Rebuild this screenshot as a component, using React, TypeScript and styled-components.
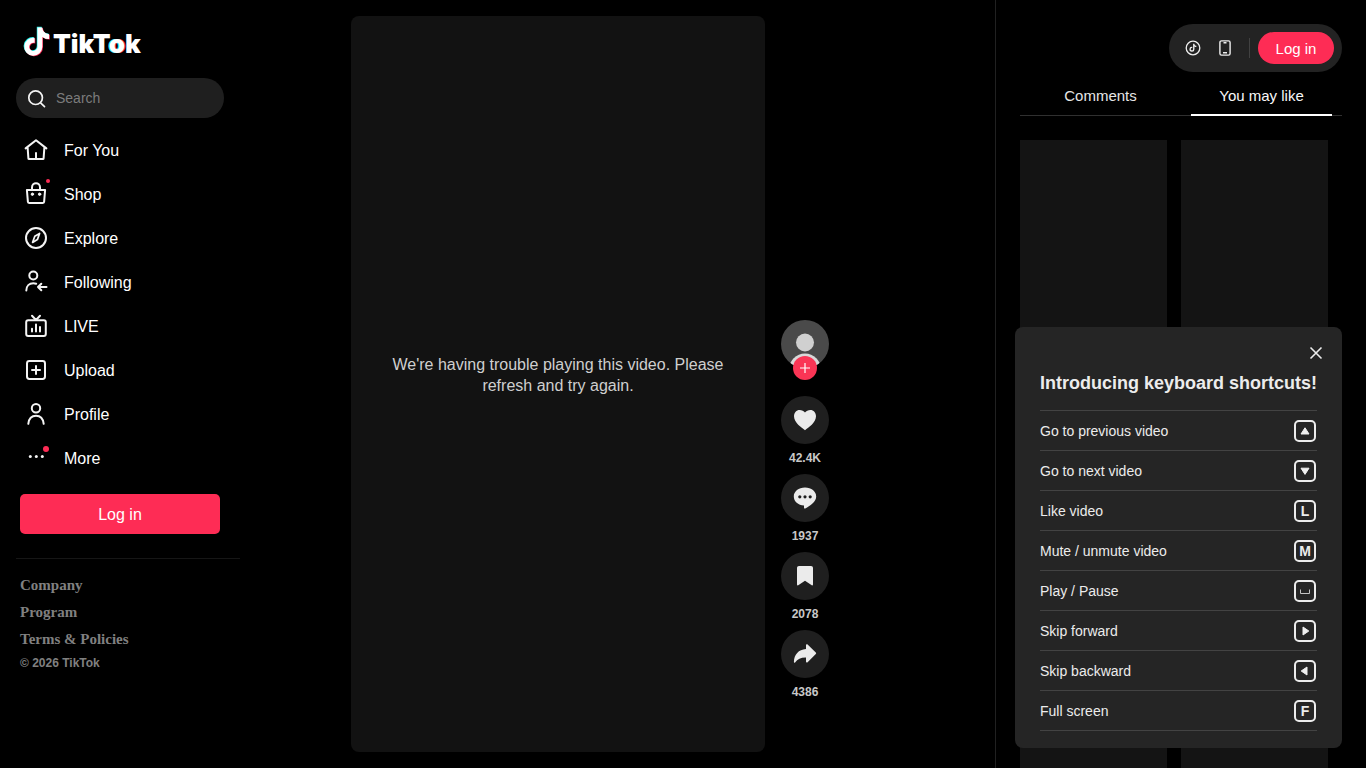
import React from "react";
import styled, { createGlobalStyle, css } from "styled-components";

const GlobalStyle = createGlobalStyle`
  *, *::before, *::after { box-sizing: border-box; }
  body {
    margin: 0;
    background: #000;
    color: #f6f6f6;
    font-family: "Liberation Sans", Arial, sans-serif;
    font-size: 16px;
  }
  button { font-family: inherit; border: 0; padding: 0; background: none; color: inherit; cursor: pointer; }
  a { color: inherit; text-decoration: none; }
  ul { list-style: none; margin: 0; padding: 0; }
`;

const Page = styled.div`
  display: flex;
  height: 100vh;
  overflow: hidden;
`;

/* ---------- Sidebar ---------- */

const Sidebar = styled.aside`
  flex: 0 0 240px;
  min-width: 0;
  padding: 20px 0 0 16px;
`;

const Logo = styled.a`
  display: flex;
  align-items: center;
  gap: 3px;
  height: 42px;
  padding-left: 7px;
  margin-bottom: 16px;
`;

const Wordmark = styled.span`
  font-family: Inter, sans-serif;
  font-weight: 900;
  font-size: 26px;
  line-height: 32px;
  color: #fff;
  padding-top: 6px;
`;

const TintedLetter = styled.span`
  text-shadow: -1px 0 #25f4ee, 1px 0 #fe2c55;
`;

const SearchBox = styled.label`
  display: flex;
  align-items: center;
  gap: 8px;
  height: 40px;
  margin: 0 16px 10px 0;
  padding: 0 12px 0 8px;
  border-radius: 20px;
  background: #1f1f1f;
`;

const SearchInput = styled.input`
  flex: 1;
  width: 100%;
  min-width: 0;
  padding: 0;
  border: 0;
  outline: 0;
  background: none;
  color: #f6f6f6;
  font: 14px/20px "Liberation Sans", Arial, sans-serif;
  &::placeholder { color: #7c7c7c; opacity: 1; }
`;

const NavLink = styled.a`
  display: flex;
  align-items: center;
  gap: 16px;
  height: 44px;
  padding-left: 8px;
  color: #fff;
`;

const NavIcon = styled.span`
  position: relative;
  display: flex;
`;

const NavLabel = styled.span`
  padding-top: 2px;
`;

const Dot = styled.i<{ $size: number }>`
  position: absolute;
  top: ${(p) => (p.$size > 4 ? 0 : -3)}px;
  right: ${(p) => (p.$size > 4 ? -1 : -2)}px;
  width: ${(p) => p.$size}px;
  height: ${(p) => p.$size}px;
  border-radius: 50%;
  background: #fe2c55;
`;

const LoginButton = styled.button<{ $pill?: boolean }>`
  background: #fe2c55;
  color: #fff;
  ${(p) =>
    p.$pill
      ? css`
          width: 76px;
          height: 32px;
          border-radius: 16px;
          font-size: 15px;
        `
      : css`
          display: block;
          width: 200px;
          height: 40px;
          margin: 14px 4px 24px;
          padding-top: 2px;
          border-radius: 5px;
          font-size: 16px;
        `}
`;

const Footer = styled.footer`
  display: flex;
  flex-direction: column;
  padding: 13px 4px 0;
  border-top: 1px solid #161616;
  color: #808080;
`;

const FooterLink = styled.a`
  font: bold 15px/27px "Liberation Serif", "Times New Roman", serif;
`;

const Copyright = styled.small`
  font-size: 12px;
  font-weight: bold;
  line-height: 20px;
`;

/* ---------- Feed ---------- */

const Feed = styled.main`
  flex: 1;
  display: flex;
  justify-content: center;
  gap: 16px;
  padding: 16px 55px 16px 0;
`;

const Video = styled.section`
  display: flex;
  align-items: center;
  justify-content: center;
  aspect-ratio: 9 / 16;
  height: 100%;
  padding: 0 32px 18px;
  border-radius: 8px;
  background: #121212;
  color: #cfcfcf;
  line-height: 21px;
  text-align: center;
`;

const Actions = styled.div`
  display: flex;
  flex-direction: column;
  justify-content: flex-end;
  width: 48px;
  padding-bottom: 44px;
`;

const Author = styled.div`
  position: relative;
  height: 76px;
`;

const FollowButton = styled.button`
  position: absolute;
  left: 12px;
  top: 36px;
  display: flex;
  align-items: center;
  justify-content: center;
  width: 24px;
  height: 24px;
  border-radius: 50%;
  background: #fa3555;
`;

const Action = styled.button`
  display: flex;
  flex-direction: column;
  align-items: center;
  height: 78px;
  color: #c8c8c8;
  font-size: 12px;
  font-weight: bold;
  line-height: 16px;
`;

const ActionCircle = styled.span`
  display: flex;
  align-items: center;
  justify-content: center;
  width: 48px;
  height: 48px;
  margin-bottom: 6px;
  border-radius: 50%;
  background: #1f1f1f;
`;

/* ---------- Right panel ---------- */

const Panel = styled.aside`
  flex: 0 0 371px;
  display: flex;
  flex-direction: column;
  padding: 24px 24px 0;
  border-left: 1px solid #212121;
`;

const Toolbar = styled.div`
  display: flex;
  align-items: center;
  align-self: flex-end;
  height: 48px;
  margin-bottom: 8px;
  padding: 8px;
  border-radius: 24px;
  background: #232323;
`;

const IconButton = styled.button`
  display: flex;
  align-items: center;
  justify-content: center;
  width: 32px;
  height: 32px;
  color: #eee;
`;

const Separator = styled.i`
  width: 1px;
  height: 20px;
  margin: 0 8px;
  background: #414141;
`;

const Tabs = styled.div`
  display: flex;
  height: 36px;
  margin-bottom: 24px;
  border-bottom: 1px solid #303030;
`;

const Tab = styled.button<{ $active?: boolean }>`
  position: relative;
  flex: 1;
  height: 36px;
  padding-bottom: 6px;
  color: ${(p) => (p.$active ? "#f8f8f8" : "#e6e6e6")};
  font-size: 15px;
  ${(p) =>
    p.$active &&
    css`
      &::after {
        content: "";
        position: absolute;
        left: 10px;
        right: 10px;
        bottom: 0;
        height: 2px;
        background: #fff;
      }
    `}
`;

const Thumbnails = styled.div`
  flex: 1;
  display: grid;
  grid-template-columns: 1fr 1fr;
  gap: 14px;
  padding-right: 14px;
`;

const Thumbnail = styled.div`
  background: #141414;
`;

/* ---------- Shortcuts card ---------- */

const Shortcuts = styled.section`
  position: fixed;
  right: 24px;
  bottom: 20px;
  width: 327px;
  padding: 16px 25px 17px;
  border-radius: 8px;
  background: #252525;
  color: #ececec;
`;

const CloseButton = styled.button`
  display: flex;
  align-items: center;
  justify-content: center;
  width: 20px;
  height: 20px;
  margin: 0 -9px 8px auto;
`;

const ShortcutsTitle = styled.h2`
  margin: 0 0 15px;
  font-size: 18px;
  line-height: 24px;
  white-space: nowrap;
`;

const ShortcutList = styled.ul`
  border-top: 1px solid #434343;
`;

const Shortcut = styled.li`
  display: flex;
  align-items: center;
  justify-content: space-between;
  height: 40px;
  padding-right: 1px;
  border-bottom: 1px solid #434343;
  font-size: 14px;
`;

const Key = styled.kbd`
  display: flex;
  align-items: center;
  justify-content: center;
  width: 22px;
  height: 22px;
  border: 2px solid #ececec;
  border-radius: 5px;
  font: bold 14px/18px "Liberation Sans", Arial, sans-serif;
`;

/* ---------- Icons ---------- */

const NOTE =
  "M448,209.91a210.06,210.06,0,0,1-122.77-39.25V349.38A162.55,162.55,0,1,1,185,188.31V278.2a74.62,74.62,0,1,0,52.23,71.18V0l88,0a121.18,121.18,0,0,0,1.86,22.17h0A122.18,122.18,0,0,0,381,102.39a121.43,121.43,0,0,0,67,20.14Z";

const NoteLogo = () => (
  <svg width="27" height="31" viewBox="-20 -20 488 552" aria-hidden="true">
    <path d={NOTE} fill="#25f4ee" transform="translate(-8 -10)" />
    <path d={NOTE} fill="#fe2c55" transform="translate(16 12)" />
    <path d={NOTE} fill="#fff" transform="translate(4 2)" />
  </svg>
);

const Line = ({ children }: { children: React.ReactNode }) => (
  <svg
    width="24"
    height="24"
    viewBox="0 0 24 24"
    fill="none"
    stroke="#f4f4f4"
    strokeWidth="2"
    strokeLinecap="round"
    strokeLinejoin="round"
    aria-hidden="true"
  >
    {children}
  </svg>
);

const Arrow = ({ points }: { points: string }) => (
  <svg width="12" height="12" viewBox="0 0 12 12" aria-hidden="true">
    <path d={points} fill="#f0f0f0" stroke="#f0f0f0" strokeWidth="1" strokeLinejoin="round" />
  </svg>
);

const navItems = [
  {
    label: "For You",
    icon: <path d="M1.6 10.4 12 2.2l10.4 8.2M3.6 9.2l.8 11.2c0 .5.3.7.7.7h13.8c.4 0 .7-.2.7-.7l.8-11.2M12 15v5.5" />,
  },
  {
    label: "Shop",
    dot: 4,
    icon: (
      <>
        <path d="M2.900 8h18.200l-1 11.800c0 .7-.5 1.100-1.200 1.100H5.100c-.7 0-1.200-.4-1.200-1.100ZM8 8V5.400C8 -.1 16 -.1 16 5.400V8" />
        <circle cx="8.400" cy="12.200" r="1.200" fill="#f4f4f4" strokeWidth="1" />
        <circle cx="15.600" cy="12.200" r="1.200" fill="#f4f4f4" strokeWidth="1" />
      </>
    ),
  },
  {
    label: "Explore",
    icon: (
      <>
        <circle cx="12" cy="12" r="10" />
        <path d="m15.600 7.400-4.800 2.800-2.200 6.200 4.800-2.800Z" strokeWidth="1.700" />
      </>
    ),
  },
  {
    label: "Following",
    icon: (
      <>
        <circle cx="9.300" cy="5.500" r="4" />
        <path d="M2.300 20.600c0-4.600 3-7.400 7-7.400 1.200 0 2 .2 2.900.5M14 17h8.500M17.300 13.700 14 17l3.300 3.300" />
      </>
    ),
  },
  {
    label: "LIVE",
    icon: (
      <>
        <rect x="2.200" y="6.200" width="19.600" height="15.800" rx="2" />
        <path d="m8 1.800 4 4.200 4-4.200M8 14.800v2.800M12 10.600v7M16 13v4.600" />
      </>
    ),
  },
  {
    label: "Upload",
    icon: (
      <>
        <rect x="3" y="3" width="18" height="18" rx="2.400" />
        <path d="M12 8v8M8 12h8" />
      </>
    ),
  },
  {
    label: "Profile",
    icon: (
      <>
        <circle cx="12" cy="6.300" r="4.200" />
        <path d="M4.300 21.800c.6-5 3.500-8 7.700-8s7.100 3 7.700 8" />
      </>
    ),
  },
  {
    label: "More",
    dot: 6,
    icon: (
      <g fill="#f4f4f4" stroke="none">
        <circle cx="6.300" cy="10.600" r="1.500" />
        <circle cx="12.300" cy="10.600" r="1.500" />
        <circle cx="18.300" cy="10.600" r="1.500" />
      </g>
    ),
  },
];

const actions = [
  {
    name: "Like",
    count: "42.4K",
    icon: <path d="M12 22.200C8.500 19.800 1 14.500 1 8.300 1 4.500 3.500 2 6.600 2c2.300 0 4.200 1.200 5.400 2.400C13.200 3.200 15.100 2 17.400 2 20.500 2 23 4.500 23 8.300c0 6.200-7.500 11.500-11 13.900Z" />,
  },
  {
    name: "Comment",
    count: "1937",
    icon: (
      <>
        <path d="M12 1.600C5.600 1.600.8 5.600.8 10.500c0 5 4.400 8.700 10.200 8.900v2.400c0 .7.700 1.100 1.300.7 4.600-2.600 10.900-6.400 10.900-12C23.200 5.600 18.400 1.600 12 1.600Z" />
        <g fill="#1f1f1f">
          <circle cx="6.800" cy="10.800" r="1.600" />
          <circle cx="12" cy="10.800" r="1.600" />
          <circle cx="17.200" cy="10.800" r="1.600" />
        </g>
      </>
    ),
  },
  {
    name: "Save",
    count: "2078",
    icon: <path d="M4 4c0-1.200.8-2 2-2h12c1.200 0 2 .8 2 2v16.400c0 .9-.9 1.300-1.600.7L12 16.700l-6.400 4.400c-.7.6-1.600.2-1.600-.7Z" />,
  },
  {
    name: "Share",
    count: "4386",
    icon: <path d="M13 3.200c0-.9 1-1.300 1.600-.7l8.200 8.100c.5.500.5 1 0 1.500l-8.200 8.100c-.6.600-1.600.2-1.600-.7v-4c-5-.1-8.400 1.300-10.900 5-.4.600-1.200.3-1.200-.4C1.200 12.500 5.500 7.700 13 7.100Z" />,
  },
];

const shortcuts: { label: string; glyph: React.ReactNode }[] = [
  { label: "Go to previous video", glyph: <Arrow points="M6 2.800 10 9H2Z" /> },
  { label: "Go to next video", glyph: <Arrow points="M6 9.400 10 3.200H2Z" /> },
  { label: "Like video", glyph: "L" },
  { label: "Mute / unmute video", glyph: "M" },
  {
    label: "Play / Pause",
    glyph: (
      <svg width="12" height="12" viewBox="0 0 12 12" aria-hidden="true">
        <path d="M1.500 4.500v4h9v-4" fill="none" stroke="#c4c4c4" />
      </svg>
    ),
  },
  { label: "Skip forward", glyph: <Arrow points="M4 2v8L9.800 6Z" /> },
  { label: "Skip backward", glyph: <Arrow points="M8 2v8L2.200 6Z" /> },
  { label: "Full screen", glyph: "F" },
];

export default function App() {
  return (
    <>
      <GlobalStyle />
      <Page>
        <Sidebar>
          <Logo href="#">
            <NoteLogo />
            <Wordmark>
              TikT<TintedLetter>o</TintedLetter>k
            </Wordmark>
          </Logo>
          <SearchBox>
            <Line>
              <circle cx="11.600" cy="11.700" r="6.800" strokeWidth="1.700" />
              <path d="m16.600 16.800 3.900 3.900" strokeWidth="1.700" />
            </Line>
            <SearchInput type="search" placeholder="Search" aria-label="Search" />
          </SearchBox>
          <nav>
            {navItems.map((item) => (
              <NavLink href="#" key={item.label}>
                <NavIcon>
                  <Line>{item.icon}</Line>
                  {item.dot && <Dot $size={item.dot} />}
                </NavIcon>
                <NavLabel>{item.label}</NavLabel>
              </NavLink>
            ))}
          </nav>
          <LoginButton>Log in</LoginButton>
          <Footer>
            <FooterLink href="#">Company</FooterLink>
            <FooterLink href="#">Program</FooterLink>
            <FooterLink href="#">Terms &amp; Policies</FooterLink>
            <Copyright>© 2026 TikTok</Copyright>
          </Footer>
        </Sidebar>

        <Feed>
          <Video>We're having trouble playing this video. Please refresh and try again.</Video>
          <Actions>
            <Author>
              <svg width="48" height="48" viewBox="0 0 48 48" aria-hidden="true">
                <clipPath id="avatar">
                  <circle cx="24" cy="24" r="24" />
                </clipPath>
                <g clipPath="url(#avatar)">
                  <rect width="48" height="48" fill="#4a4a4a" />
                  <circle cx="24" cy="22.500" r="9" fill="#d0d0d0" />
                  <circle cx="24" cy="49.500" r="16" fill="#d8d8d8" />
                </g>
              </svg>
              <FollowButton aria-label="Follow">
                <svg width="12" height="12" viewBox="0 0 12 12" aria-hidden="true">
                  <path d="M6 1v10M1 6h10" stroke="#fff" strokeWidth="1.200" />
                </svg>
              </FollowButton>
            </Author>
            {actions.map((action) => (
              <Action key={action.name} aria-label={action.name}>
                <ActionCircle>
                  <svg width="24" height="24" viewBox="0 0 24 24" fill="#ebebeb" aria-hidden="true">
                    {action.icon}
                  </svg>
                </ActionCircle>
                {action.count}
              </Action>
            ))}
          </Actions>
        </Feed>

        <Panel>
          <Toolbar>
            <IconButton aria-label="Get coins">
              <svg width="16" height="16" viewBox="0 0 16 16" aria-hidden="true">
                <circle cx="8" cy="8" r="6.800" fill="none" stroke="currentColor" strokeWidth="1.300" />
                <path d={NOTE} fill="currentColor" transform="translate(4.400 3.800) scale(.0155)" />
              </svg>
            </IconButton>
            <IconButton aria-label="Get the app">
              <svg width="16" height="16" viewBox="0 0 16 16" fill="none" stroke="currentColor" strokeWidth="1.400" aria-hidden="true">
                <rect x="2.900" y=".9" width="10.200" height="14.200" rx="1.600" />
                <path d="M6.500 2.700h3M6 12.700h4" />
              </svg>
            </IconButton>
            <Separator />
            <LoginButton $pill>Log in</LoginButton>
          </Toolbar>
          <Tabs role="tablist">
            <Tab role="tab" aria-selected="false">Comments</Tab>
            <Tab role="tab" aria-selected="true" $active>You may like</Tab>
          </Tabs>
          <Thumbnails>
            <Thumbnail />
            <Thumbnail />
          </Thumbnails>
        </Panel>
      </Page>

      <Shortcuts aria-labelledby="shortcuts-title">
        <CloseButton aria-label="Close">
          <svg width="14" height="14" viewBox="0 0 14 14" aria-hidden="true">
            <path d="m1.500 1.500 11 11m0-11-11 11" stroke="#ececec" strokeWidth="1.600" />
          </svg>
        </CloseButton>
        <ShortcutsTitle id="shortcuts-title">Introducing keyboard shortcuts!</ShortcutsTitle>
        <ShortcutList>
          {shortcuts.map((shortcut) => (
            <Shortcut key={shortcut.label}>
              {shortcut.label}
              <Key>{shortcut.glyph}</Key>
            </Shortcut>
          ))}
        </ShortcutList>
      </Shortcuts>
    </>
  );
}
